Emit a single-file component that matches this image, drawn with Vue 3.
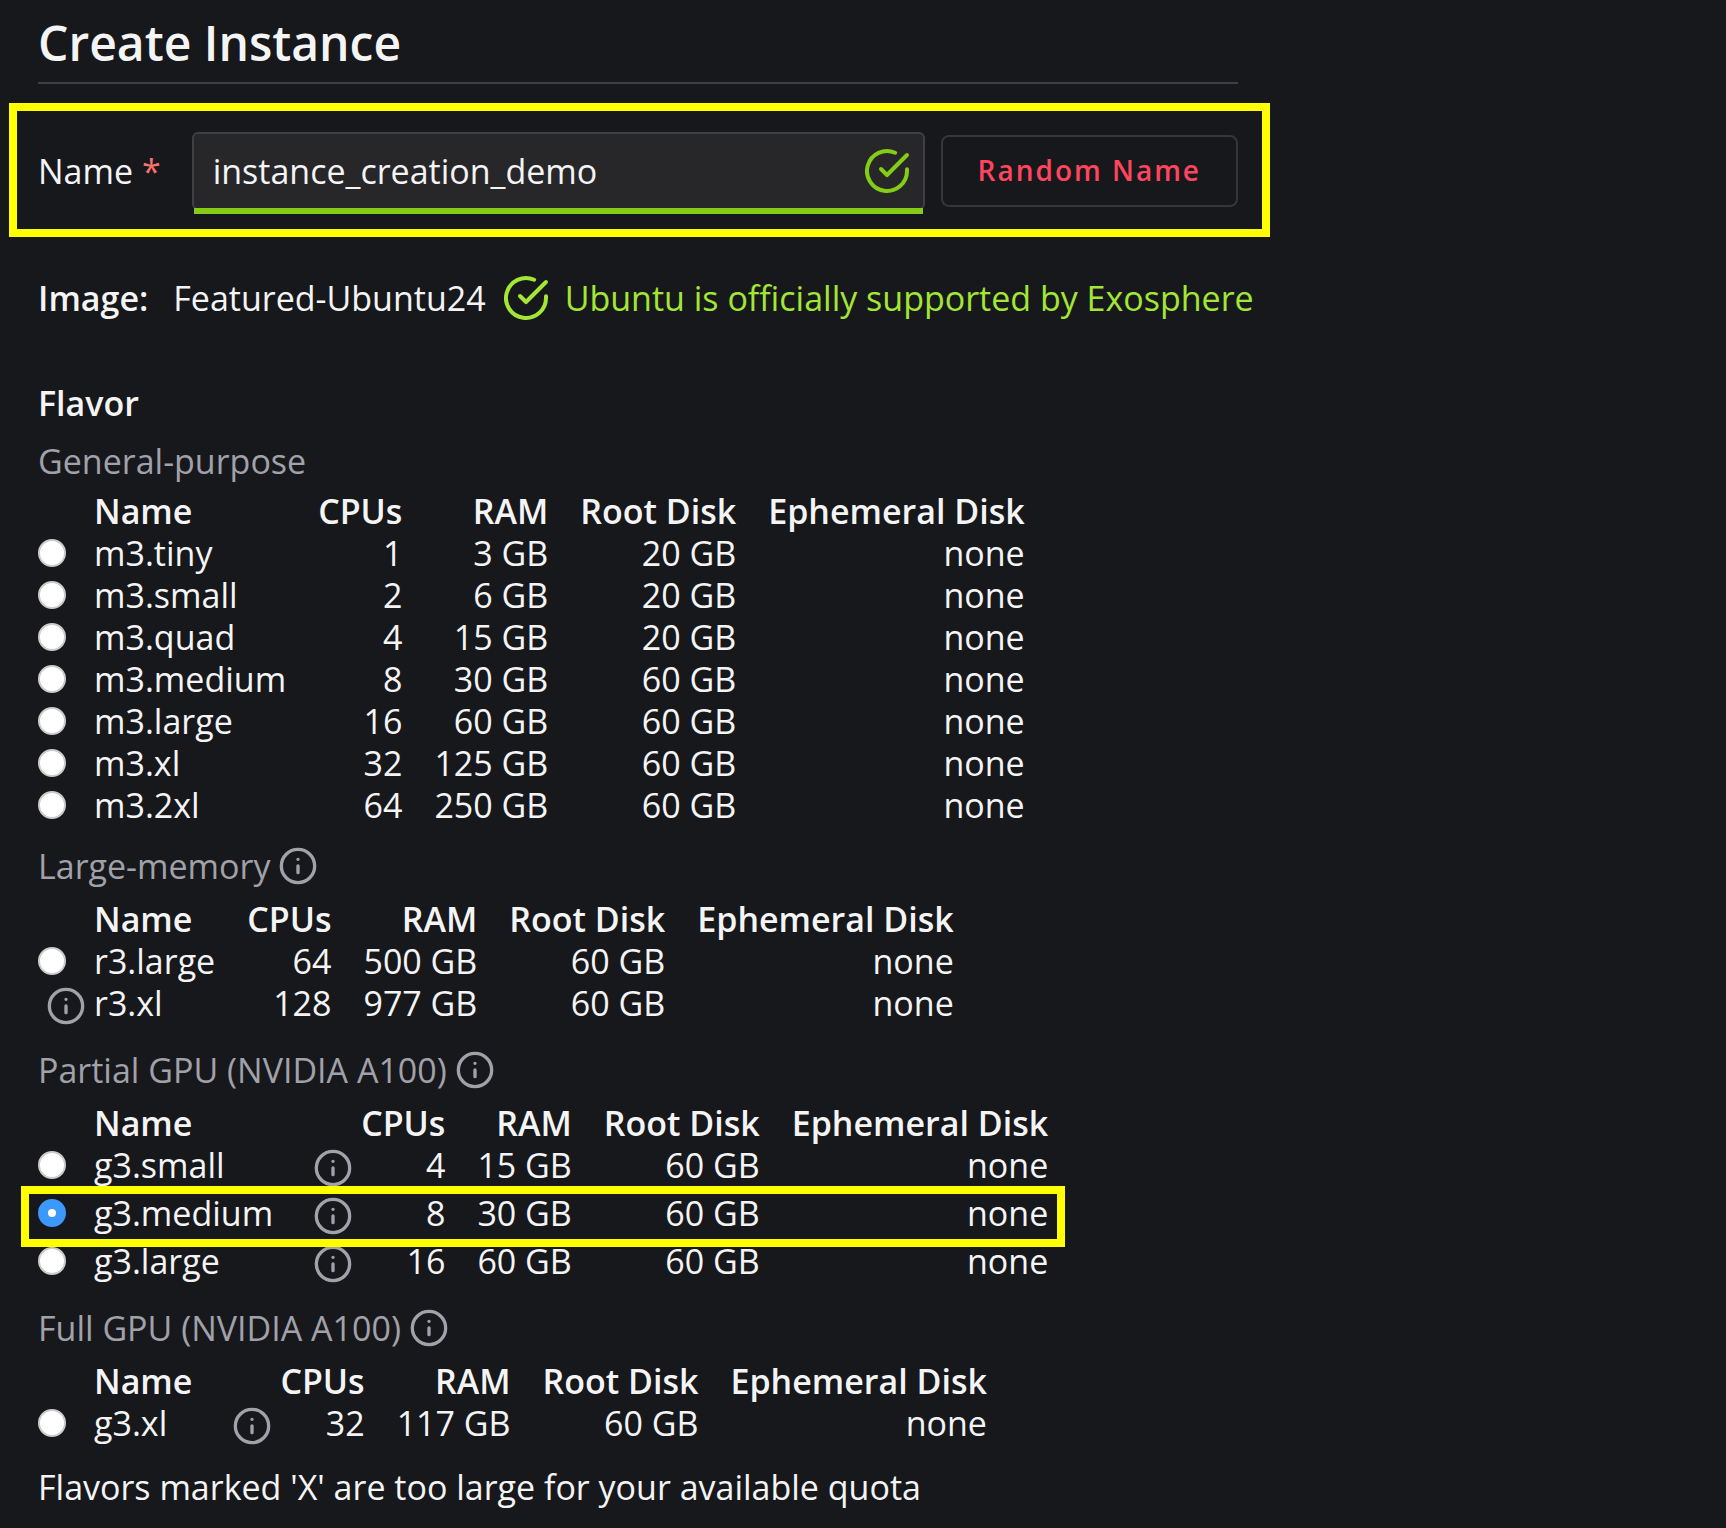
<script setup>
import { ref } from 'vue'

const name = ref('instance_creation_demo')
const selected = ref('g3.medium')

const flavor = (name, cpus, ram, root, extra = {}) => ({ name, cpus, ram, root, ephemeral: 'none', ...extra })

const groups = [
  {
    title: 'General-purpose',
    flavors: [
      flavor('m3.tiny', 1, '3 GB', '20 GB'),
      flavor('m3.small', 2, '6 GB', '20 GB'),
      flavor('m3.quad', 4, '15 GB', '20 GB'),
      flavor('m3.medium', 8, '30 GB', '60 GB'),
      flavor('m3.large', 16, '60 GB', '60 GB'),
      flavor('m3.xl', 32, '125 GB', '60 GB'),
      flavor('m3.2xl', 64, '250 GB', '60 GB'),
    ],
  },
  {
    title: 'Large-memory',
    info: true,
    flavors: [
      flavor('r3.large', 64, '500 GB', '60 GB'),
      flavor('r3.xl', 128, '977 GB', '60 GB', { unavailable: true }),
    ],
  },
  {
    title: 'Partial GPU (NVIDIA A100)',
    info: true,
    notes: true,
    flavors: [
      flavor('g3.small', 4, '15 GB', '60 GB'),
      flavor('g3.medium', 8, '30 GB', '60 GB', { highlighted: true }),
      flavor('g3.large', 16, '60 GB', '60 GB'),
    ],
  },
  {
    title: 'Full GPU (NVIDIA A100)',
    info: true,
    notes: true,
    flavors: [flavor('g3.xl', 32, '117 GB', '60 GB')],
  },
]

const words = ['amber', 'brisk', 'cedar', 'delta', 'ember', 'fjord']
function randomName() {
  const pick = () => words[Math.floor(Math.random() * words.length)]
  name.value = `${pick()}_${pick()}`
}
</script>

<template>
  <svg class="sprite" aria-hidden="true">
    <symbol id="icon-info" viewBox="0 0 24 24">
      <circle cx="12" cy="12" r="10" />
      <path d="M12 16v-4M12 8h.01" />
    </symbol>
    <symbol id="icon-check" viewBox="0 0 24 24">
      <path d="M22 11.08V12a10 10 0 1 1-5.93-9.14" />
      <path d="M22 4 12 14.01l-3-3" />
    </symbol>
  </svg>

  <main class="page">
    <h1 class="title">Create Instance</h1>

    <div class="name-row">
      <label class="name-label" for="instance-name">Name <span class="required">*</span></label>
      <div class="field">
        <input id="instance-name" v-model="name" class="name-input" type="text" spellcheck="false" />
        <svg class="icon check"><use href="#icon-check" /></svg>
      </div>
      <button class="random" type="button" @click="randomName">Random Name</button>
    </div>

    <div class="image-row">
      <strong>Image:</strong>
      <span class="image-name">Featured-Ubuntu24</span>
      <span class="supported">
        <svg class="icon check"><use href="#icon-check" /></svg>
        Ubuntu is officially supported by Exosphere
      </span>
    </div>

    <h2 class="section">Flavor</h2>

    <section v-for="group in groups" :key="group.title" class="group">
      <h3 class="group-title" :class="{ 'with-icon': group.info }">
        {{ group.title }}
        <svg v-if="group.info" class="icon info"><use href="#icon-info" /></svg>
      </h3>
      <table class="flavors">
        <thead>
          <tr>
            <th class="pick"></th>
            <th class="name">Name</th>
            <th v-if="group.notes" class="note"></th>
            <th class="cpus">CPUs</th>
            <th>RAM</th>
            <th>Root Disk</th>
            <th>Ephemeral Disk</th>
          </tr>
        </thead>
        <tbody>
          <tr v-for="f in group.flavors" :key="f.name" :class="{ highlighted: f.highlighted }">
            <td class="pick">
              <svg v-if="f.unavailable" class="icon info"><use href="#icon-info" /></svg>
              <input v-else :id="f.name" v-model="selected" class="radio" type="radio" name="flavor" :value="f.name" />
            </td>
            <td class="name"><label :for="f.unavailable ? null : f.name">{{ f.name }}</label></td>
            <td v-if="group.notes" class="note">
              <svg class="icon info"><use href="#icon-info" /></svg>
            </td>
            <td class="cpus">{{ f.cpus }}</td>
            <td>{{ f.ram }}</td>
            <td>{{ f.root }}</td>
            <td>{{ f.ephemeral }}</td>
          </tr>
        </tbody>
      </table>
    </section>

    <p class="quota">Flavors marked 'X' are too large for your available quota</p>
  </main>
</template>

<style>
html,
body {
  margin: 0;
  background: #17181c;
}
</style>

<style scoped>
.sprite {
  position: absolute;
  width: 0;
  height: 0;
}

.page {
  padding: 0 38px 20px;
  color: #f4f4f5;
  font-family: 'Open Sans', 'Noto Sans', sans-serif;
  font-size: 34px;
  line-height: 42px;
  white-space: nowrap;
}

.title {
  max-width: 1200px;
  margin: 0;
  padding: 16px 0 12px;
  border-bottom: 2px solid #3f3f46;
  font-size: 48px;
  font-weight: 600;
  line-height: 54px;
}

.icon {
  display: block;
  flex: none;
  fill: none;
  stroke: currentColor;
  stroke-width: 2;
  stroke-linecap: round;
  stroke-linejoin: round;
}

.icon.check {
  width: 48px;
  height: 48px;
}

.icon.info {
  width: 40px;
  height: 40px;
  color: #a1a1aa;
}

.name-row {
  position: relative;
  display: flex;
  align-items: center;
  max-width: 1200px;
  margin-top: 48px;
}

.name-row::after {
  content: '';
  position: absolute;
  inset: -29px -32px -27px -29px;
  border: 8px solid #ffff00;
  pointer-events: none;
}

.name-label {
  margin-right: 31px;
}

.required {
  color: #f87171;
}

.field {
  position: relative;
  flex: 1;
  margin-right: 16px;
}

.field::after {
  content: '';
  position: absolute;
  right: 2px;
  bottom: -4px;
  left: 2px;
  height: 6px;
  background: #84cc16;
}

.field .icon {
  position: absolute;
  top: 15px;
  right: 14px;
  color: #84cc16;
}

.name-input {
  display: block;
  box-sizing: border-box;
  width: 100%;
  height: 78px;
  padding: 0 76px 0 19px;
  border: 2px solid #3f3f46;
  border-radius: 6px;
  outline: none;
  background: #27272a;
  color: inherit;
  font: inherit;
}

.random {
  height: 72px;
  padding: 0 35px 2px;
  border: 2px solid #35353a;
  border-radius: 8px;
  background: transparent;
  color: #ff455e;
  font-family: inherit;
  font-size: 28px;
  font-weight: 600;
  letter-spacing: 2px;
}

.image-row {
  display: flex;
  align-items: center;
  height: 44px;
  margin-top: 66px;
}

.image-row strong {
  font-weight: 600;
}

.image-name {
  margin: 0 16px 0 25px;
}

.supported {
  display: flex;
  align-items: center;
  gap: 15px;
  color: #a3e635;
}

.section {
  margin: 62px 0 16px;
  font-size: 34px;
  font-weight: 600;
}

.group {
  margin-bottom: 16px;
}

.group-title {
  display: flex;
  align-items: center;
  gap: 8px;
  margin: 0 0 8px;
  color: #a1a1aa;
  font-size: 34px;
  font-weight: 400;
}

.group-title.with-icon {
  height: 48px;
}

.flavors {
  border-collapse: collapse;
}

.flavors th,
.flavors td {
  padding: 0 0 0 32px;
  font-weight: 400;
  text-align: right;
  vertical-align: top;
}

.flavors th {
  font-weight: 600;
}

.flavors .name {
  padding: 0 32px 0 0;
  text-align: left;
}

.flavors .cpus {
  padding: 0;
}

.flavors .pick,
.flavors .note {
  width: 56px;
  min-width: 56px;
  padding: 0;
}

.flavors .icon {
  margin: 4px 8px;
}

.radio {
  appearance: none;
  display: block;
  box-sizing: border-box;
  width: 28px;
  height: 28px;
  margin: 7px 0;
  border: 2px solid #cbcbcb;
  border-radius: 50%;
  background: #ffffff;
}

.radio:checked {
  border: 10px solid #3b99fc;
}

.highlighted {
  position: relative;
}

.highlighted::after {
  content: '';
  position: absolute;
  inset: -6px -17px -7px;
  border: 8px solid #ffff00;
  pointer-events: none;
}

.quota {
  margin: 0;
}
</style>
